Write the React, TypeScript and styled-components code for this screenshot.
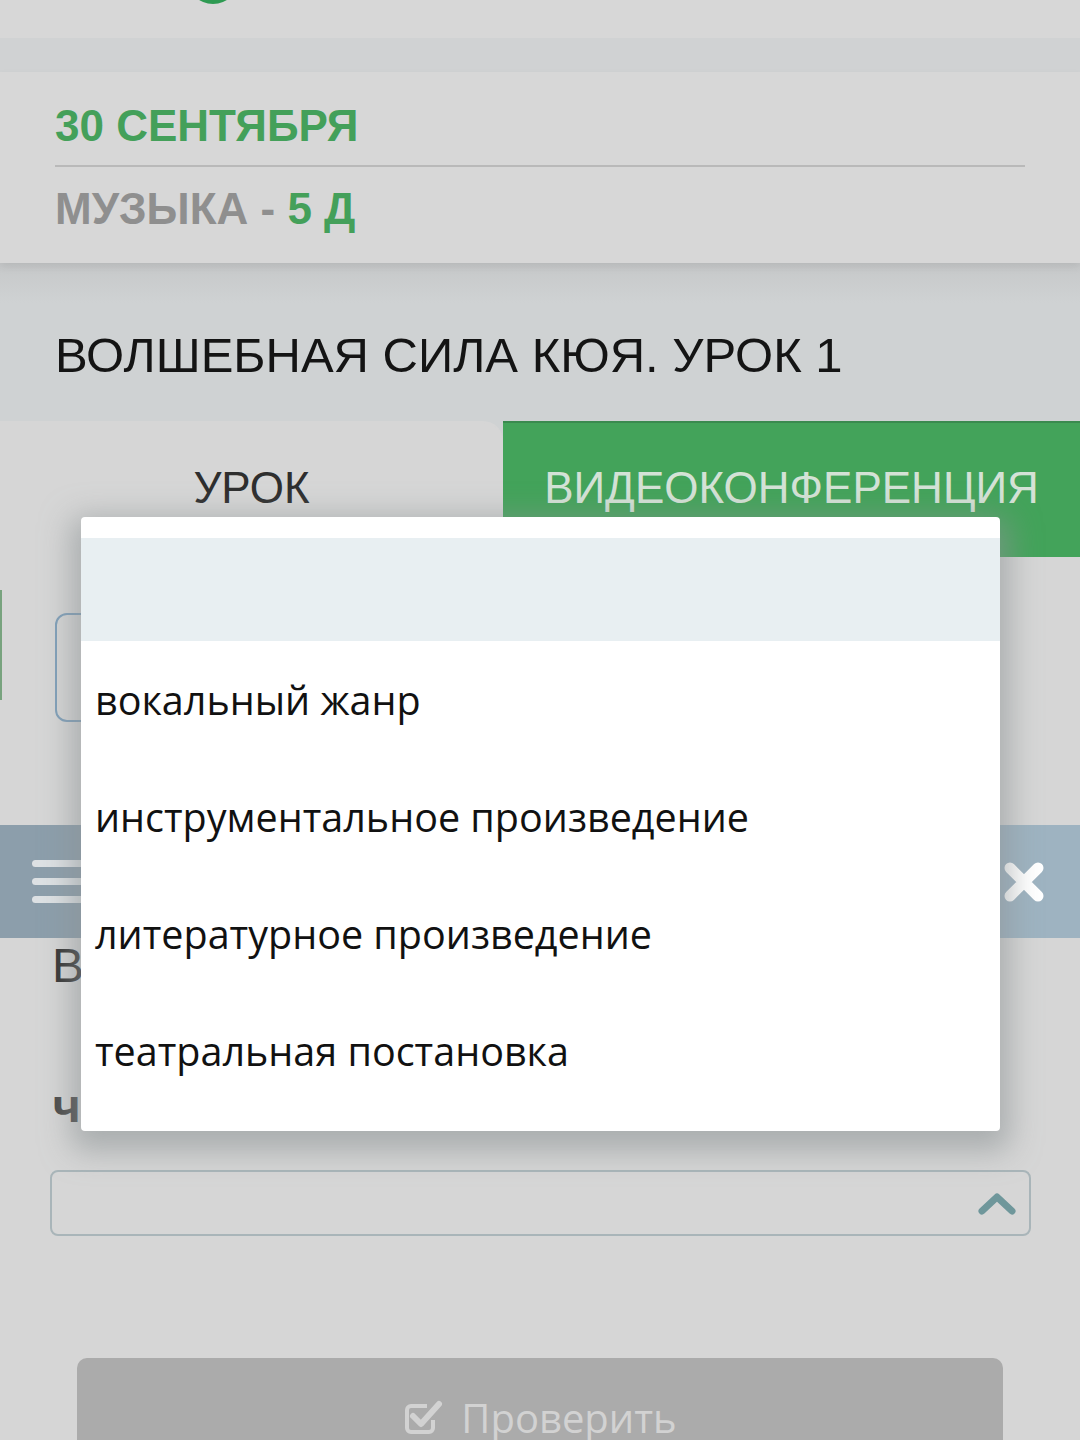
import styled, { createGlobalStyle } from 'styled-components'

const GlobalStyle = createGlobalStyle`
  html, body {
    margin: 0;
    padding: 0;
    background: #d6d6d6;
  }
  body {
    font-family: "Liberation Sans", Arial, sans-serif;
  }
`

const options = [
  'вокальный жанр',
  'инструментальное произведение',
  'литературное произведение',
  'театральная постановка',
]

export default function App() {
  return (
    <>
      <GlobalStyle />
      <Page>
        <TopBar>
          <LogoDot />
        </TopBar>
        <Strip />

        <DateCard>
          <DateLine>30 СЕНТЯБРЯ</DateLine>
          <Divider />
          <SubjectLine>
            МУЗЫКА - <Green>5 Д</Green>
          </SubjectLine>
        </DateCard>

        <TitleBand>
          <Title>ВОЛШЕБНАЯ СИЛА КЮЯ. УРОК 1</Title>
        </TitleBand>

        <Tabs>
          <Tab>УРОК</Tab>
          <Tab $active>ВИДЕОКОНФЕРЕНЦИЯ</Tab>
        </Tabs>

        <Content>
          <AnswerRow>
            <AnswerInput />
          </AnswerRow>

          <ToolRow>
            <MenuButton>
              <MenuLine />
              <MenuLine />
              <MenuLine />
            </MenuButton>
            <CloseButton>
              <CloseIcon />
            </CloseButton>
          </ToolRow>

          <Question>В</Question>
          <Label>ч</Label>

          <SelectBox>
            <ChevronUp />
          </SelectBox>

          <CheckButton>
            <CheckIcon />
            <span>Проверить</span>
          </CheckButton>
        </Content>

        <Dropdown>
          <Option $selected />
          {options.map((o) => (
            <Option key={o}>{o}</Option>
          ))}
        </Dropdown>
      </Page>
    </>
  )
}

const Page = styled.div`
  position: relative;
  width: 1080px;
  height: 1440px;
  overflow: hidden;
  background: #d6d6d6;
`

const TopBar = styled.div`
  height: 38px;
  padding-left: 187px;
  overflow: hidden;
  background: #d7d7d7;
`

const LogoDot = styled.div`
  width: 52px;
  height: 52px;
  margin-top: -48px;
  border-radius: 50%;
  background: #2e9a52;
`

const Strip = styled.div`
  height: 34px;
  background: #d0d2d3;
`

const DateCard = styled.div`
  position: relative;
  z-index: 1;
  height: 191px;
  box-sizing: border-box;
  padding: 29px 55px 0;
  background: #d7d7d7;
  box-shadow: 0 4px 8px rgba(0, 0, 0, 0.08);
  font-weight: 700;
  font-size: 44px;
  line-height: 50px;
`

const DateLine = styled.div`
  color: #44a05a;
`

const Divider = styled.div`
  height: 2px;
  margin-top: 14px;
  background: #b9b9b9;
`

const SubjectLine = styled.div`
  margin-top: 17px;
  color: #8f8f8f;
`

const Green = styled.span`
  color: #44a05a;
`

const TitleBand = styled.div`
  height: 158px;
  box-sizing: border-box;
  padding: 64px 55px 0;
  background: linear-gradient(#c6c8c9, #cfd2d3 40px, #cfd2d3);
`

const Title = styled.h1`
  margin: 0;
  font-weight: 400;
  font-size: 49px;
  line-height: 56px;
  color: #141414;
`

const Tabs = styled.div`
  display: grid;
  grid-template-columns: 503px 1fr;
  height: 136px;
  background: #cfd2d3;
`

const Tab = styled.div<{ $active?: boolean }>`
  display: flex;
  align-items: center;
  justify-content: center;
  padding-bottom: 4px;
  font-size: 44px;
  color: ${(p) => (p.$active ? '#d4e2d6' : '#2e2e2e')};
  background: ${(p) => (p.$active ? '#43a35a' : '#d6d6d6')};
  border-top: 2px solid ${(p) => (p.$active ? '#3a8a4f' : '#d6d6d6')};
  border-radius: ${(p) => (p.$active ? '0' : '0 20px 0 0')};
`

const Content = styled.div`
  display: flex;
  flex-direction: column;
`

const AnswerRow = styled.div`
  height: 110px;
  margin-top: 33px;
  border-left: 2px solid #78a37e;
`

const AnswerInput = styled.div`
  width: 940px;
  height: 109px;
  margin: 23px 0 0 53px;
  box-sizing: border-box;
  border: 2px solid #7f9fb9;
  border-radius: 12px;
`

const ToolRow = styled.div`
  display: flex;
  justify-content: space-between;
  height: 113px;
  margin-top: 125px;
`

const MenuButton = styled.div`
  display: flex;
  flex-direction: column;
  justify-content: center;
  gap: 11px;
  width: 120px;
  padding-left: 32px;
  box-sizing: border-box;
  background: #8c9eab;
  border-radius: 0 10px 10px 0;
`

const MenuLine = styled.div`
  width: 56px;
  height: 7px;
  border-radius: 4px;
  background: #dde1e4;
`

const CloseButton = styled.div`
  display: flex;
  align-items: center;
  justify-content: center;
  width: 113px;
  background: #9eb3c1;
  border-radius: 10px 0 0 10px;
`

const Question = styled.div`
  padding-left: 52px;
  font-size: 48px;
  line-height: 56px;
  color: #333;
`

const Label = styled.div`
  margin-top: 87px;
  padding-left: 52px;
  font-family: "Open Sans", sans-serif;
  font-weight: 700;
  font-size: 44px;
  line-height: 48px;
  color: #4a4a4a;
`

const SelectBox = styled.div`
  display: flex;
  align-items: center;
  justify-content: flex-end;
  width: 981px;
  height: 66px;
  margin: 41px 0 0 50px;
  padding-right: 12px;
  box-sizing: border-box;
  border: 2px solid #a9b5b9;
  border-radius: 8px;
`

const CheckButton = styled.div`
  display: flex;
  justify-content: center;
  gap: 16px;
  width: 926px;
  height: 120px;
  margin: 122px 0 0 77px;
  padding-top: 34px;
  box-sizing: border-box;
  background: #ababab;
  border-radius: 10px;
  font-family: "Open Sans", sans-serif;
  font-size: 40px;
  line-height: 52px;
  color: #d2d2d2;
`

const Dropdown = styled.div`
  position: absolute;
  top: 517px;
  left: 81px;
  width: 919px;
  padding: 21px 0 22px;
  box-sizing: border-box;
  background: #fff;
  border-radius: 4px;
  box-shadow: 0 10px 30px 10px rgba(140, 146, 148, 0.6);
`

const Option = styled.div<{ $selected?: boolean }>`
  display: flex;
  align-items: center;
  height: ${(p) => (p.$selected ? '103px' : '117px')};
  padding-left: 14px;
  background: ${(p) => (p.$selected ? '#e8eff2' : '#fff')};
  font-family: "Open Sans", sans-serif;
  font-size: 39.5px;
  color: #111;
`

const CloseIcon = () => (
  <svg width="44" height="44" viewBox="0 0 44 44">
    <path
      d="M8 8L36 36M36 8L8 36"
      stroke="#fff"
      strokeWidth="11"
      strokeLinecap="round"
    />
  </svg>
)

const ChevronUp = () => (
  <svg width="40" height="28" viewBox="0 0 40 28">
    <path
      d="M5 22L20 8L35 22"
      fill="none"
      stroke="#6f979b"
      strokeWidth="7"
      strokeLinecap="round"
      strokeLinejoin="round"
    />
  </svg>
)

const CheckIcon = () => (
  <svg width="42" height="40" viewBox="0 0 42 40" style={{ marginTop: 6 }}>
    <path
      d="M30 22v8a4 4 0 0 1-4 4H8a4 4 0 0 1-4-4V12a4 4 0 0 1 4-4h16"
      fill="none"
      stroke="#d2d2d2"
      strokeWidth="4"
    />
    <path
      d="M10 18l8 8L36 6"
      fill="none"
      stroke="#d2d2d2"
      strokeWidth="6"
      strokeLinecap="round"
      strokeLinejoin="round"
    />
  </svg>
)
